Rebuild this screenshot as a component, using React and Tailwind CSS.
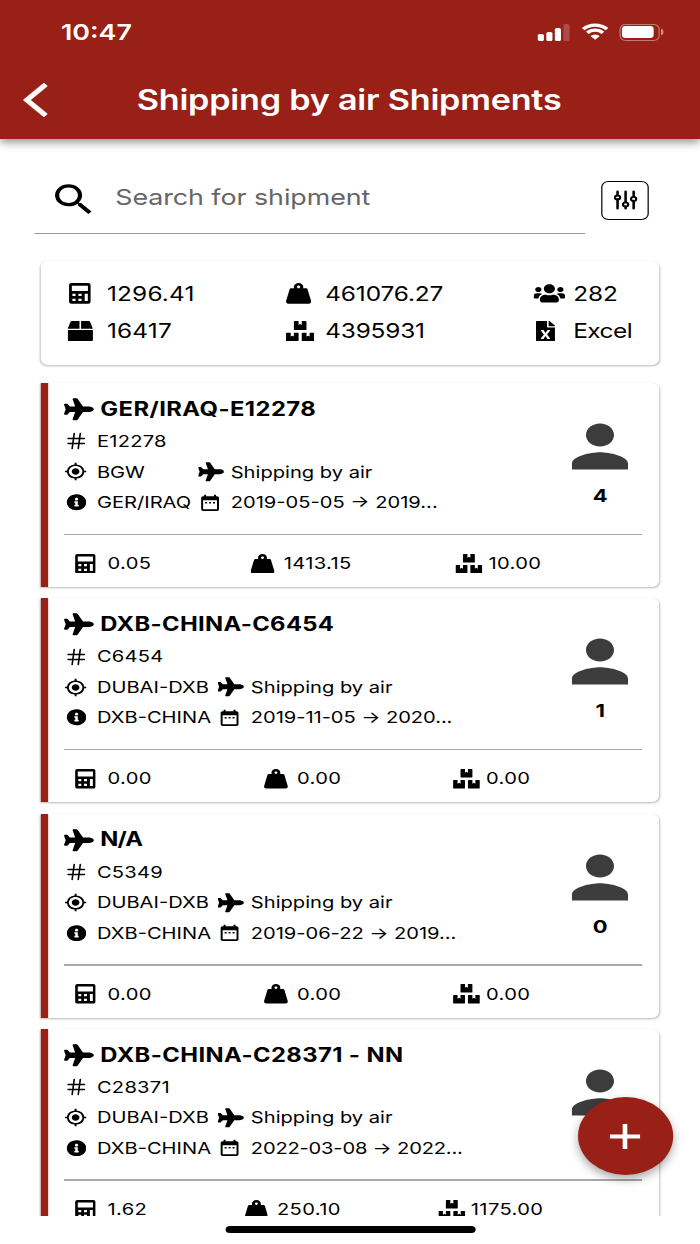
import React from "react";
import {
  FaWeightHanging,
  FaUsers,
  FaBox,
  FaBoxes,
  FaFileExcel,
  FaPlane,
  FaInfoCircle,
} from "react-icons/fa";
import { MdMyLocation, MdDateRange, MdPerson, MdSearch } from "react-icons/md";
import { Hash } from "lucide-react";

const shipments = [
  {
    title: "GER/IRAQ-E12278", code: "E12278", place: "BGW", route: "GER/IRAQ",
    dates: "2019-05-05 → 2019...", people: "4", stats: ["0.05", "1413.15", "10.00"],
    info: "grid-cols-[83px_1fr]", cols: "grid-cols-[144px_168px_1fr]",
    titleTracking: "tracking-[0.35px]", dateTracking: "tracking-normal",
  },
  {
    title: "DXB-CHINA-C6454", code: "C6454", place: "DUBAI-DXB", route: "DXB-CHINA",
    dates: "2019-11-05 → 2020...", people: "1", stats: ["0.00", "0.00", "0.00"],
    info: "grid-cols-[99.5px_1fr]", cols: "grid-cols-[155px_155px_1fr]",
    titleTracking: "tracking-[0.27px]", dateTracking: "tracking-[-0.05px]",
  },
  {
    title: "N/A", code: "C5349", place: "DUBAI-DXB", route: "DXB-CHINA",
    dates: "2019-06-22 → 2019...", people: "0", stats: ["0.00", "0.00", "0.00"],
    info: "grid-cols-[99.5px_1fr]", cols: "grid-cols-[155px_155px_1fr]",
    titleTracking: "tracking-[-0.8px]", dateTracking: "tracking-[-0.03px]",
  },
  {
    title: "DXB-CHINA-C28371 - NN", code: "C28371", place: "DUBAI-DXB", route: "DXB-CHINA",
    dates: "2022-03-08 → 2022...", people: "", stats: ["1.62", "250.10", "1175.00"],
    info: "grid-cols-[99.5px_1fr]", cols: "grid-cols-[138.5px_159px_1fr]",
    titleTracking: "tracking-[0.33px]", dateTracking: "tracking-[-0.16px]",
  },
];

function CalculatorIcon({ className }) {
  return (
    <svg className={className} viewBox="0 0 18 21" fill="currentColor" fillRule="evenodd">
      <path d="M2 0h14a2 2 0 0 1 2 2v17a2 2 0 0 1-2 2H2a2 2 0 0 1-2-2V2a2 2 0 0 1 2-2ZM2.3 2.8v5.2h13.4V2.8ZM2.8 10.9v2.4h2.6v-2.4ZM7.8 10.9v2.4h2.6v-2.4ZM13 10.9v7.4h2.6v-7.4ZM2.8 15.9v2.4h2.6v-2.4ZM7.8 15.9v2.4h2.6v-2.4Z" />
    </svg>
  );
}

function StatusBar() {
  return (
    <div className="flex h-[64px] items-center justify-between pl-[50px] pr-[29.8px]">
      <span className="text-[22px] font-semibold">10:47</span>
      <div className="flex h-[17px] items-end">
        <div className="mr-[9.5px] flex items-end gap-[1.9px]">
          <i className="h-[6.7px] w-[5px] rounded-[1.5px] bg-white" />
          <i className="h-[9px] w-[5px] rounded-[1.5px] bg-white" />
          <i className="h-[12.7px] w-[5px] rounded-[1.5px] bg-white" />
          <i className="h-[16.5px] w-[5px] rounded-[1.5px] bg-white/20" />
        </div>
        <svg className="mb-[1px] mr-[9px] h-[17px] w-[22px]" viewBox="0 0 22 17" fill="none" stroke="white" strokeWidth="3.2">
          <path d="M1.24 6.24a13.8 13.8 0 0 1 19.52 0" />
          <path d="M4.64 9.8a9 9 0 0 1 12.72 0" />
          <path d="M11 16.8 7.2 13a5.3 5.3 0 0 1 7.6 0Z" fill="white" stroke="none" />
        </svg>
        <div className="h-[17px] w-[33.6px] rounded-[5px] border border-white/40 p-[1.4px]">
          <div className="h-full w-[26px] rounded-[3px] bg-white" />
        </div>
        <i className="mb-[5.5px] ml-[1px] h-[6px] w-[2px] rounded-r-full bg-white/50" />
      </div>
    </div>
  );
}

function SummaryItem({ icon: Icon, iconClass, slot, text = "tracking-normal", children }) {
  return (
    <div className="flex items-center">
      <span className={slot}>
        <Icon className={iconClass} />
      </span>
      <span className={"text-[20px] " + text}>{children}</span>
    </div>
  );
}

function Stat({ icon: Icon, iconClass, slot, children }) {
  return (
    <div className="flex items-center pt-[1px]">
      <span className={slot}>
        <Icon className={iconClass} />
      </span>
      <span className="text-[16.5px] tracking-[0.3px]">{children}</span>
    </div>
  );
}

function InfoCell({ icon, slot, text = "tracking-normal", children }) {
  return (
    <div className="flex items-center">
      <span className={"shrink-0 " + slot}>{icon}</span>
      <span className={"whitespace-nowrap " + text}>{children}</span>
    </div>
  );
}

function ShipmentCard({ s }) {
  return (
    <article className="flex h-[204px] shrink-0 rounded-r-[6px] shadow-[0_1px_2px_rgba(0,0,0,0.28)]">
      <div className="w-[5.7px] bg-[#982016]" />
      <div className="flex-1 pl-[13.5px] pr-[14px]">
        <div className="flex h-[150.5px]">
          <div className="flex-1 pt-[11.4px] text-[16.5px]">
            <h2 className={"flex h-[30px] items-center whitespace-nowrap text-[19.5px] font-bold " + s.titleTracking}>
              <span className="w-[29.3px]"><FaPlane size={24.5} /></span>
              {s.title}
            </h2>
            <div className="flex h-[34px] items-center tracking-[0.2px]">
              <span className="w-[26.5px]"><Hash size={20} strokeWidth={1.6} className="-ml-[0.5px]" /></span>
              {s.code}
            </div>
            <div className={"grid h-[27px] items-center " + s.info}>
              <InfoCell slot="w-[26.5px]" icon={<MdMyLocation size={19} />}>{s.place}</InfoCell>
              <InfoCell slot="ml-[26.5px] w-[26.7px]" icon={<FaPlane size={21.5} />}>Shipping by air</InfoCell>
            </div>
            <div className={"grid h-[34px] items-center " + s.info}>
              <InfoCell slot="w-[26.5px] pl-[1.5px]" icon={<FaInfoCircle size={16.5} />}>{s.route}</InfoCell>
              <InfoCell slot="ml-[26.5px] w-[26.7px]" text={s.dateTracking} icon={<MdDateRange size={19.5} />}>{s.dates}</InfoCell>
            </div>
          </div>
          <div className="flex w-[69px] flex-col items-center pt-[29px] text-[#3c3c3c]">
            <MdPerson size={69} className="shrink-0" />
            <span className="pt-[1px] text-[18px] font-bold leading-[28px] text-black">{s.people}</span>
          </div>
        </div>
        <div className="h-[1.5px] bg-[#a9a9a9]" />
        <div className={"grid h-[56px] items-center pl-[9px] " + s.cols}>
          <Stat icon={CalculatorIcon} iconClass="h-[19.5px] w-[17px]" slot="w-[26.2px]">{s.stats[0]}</Stat>
          <Stat icon={FaWeightHanging} iconClass="h-[19.5px] w-[19.5px]" slot="w-[26.6px]">{s.stats[1]}</Stat>
          <Stat icon={FaBoxes} iconClass="h-[19.5px] w-[22px]" slot="w-[26.6px]">{s.stats[2]}</Stat>
        </div>
      </div>
    </article>
  );
}

export default function App() {
  return (
    <div className="h-[1244px] w-[700px] overflow-hidden bg-white">
      <div className="relative flex h-[1244px] w-[574px] origin-top-left scale-x-[1.2195] flex-col bg-white font-['Inter','Liberation_Sans',sans-serif] text-black">
        <header className="h-[138.5px] shrink-0 bg-[#982016] text-white shadow-[0_3px_8px_rgba(0,0,0,0.45)]">
          <StatusBar />
          <div className="flex h-[72px] items-center pl-[18.6px]">
            <svg className="h-[34px] w-[20px]" viewBox="0 2.1 11.67 19.8" fill="currentColor">
              <path d="M11.67 3.87 9.9 2.1 0 12l9.9 9.9 1.77-1.77L3.54 12z" stroke="currentColor" strokeWidth="0.25" />
            </svg>
            <h1 className="ml-[73.5px] whitespace-nowrap text-[28px] font-semibold tracking-[-0.18px]">Shipping by air Shipments</h1>
          </div>
        </header>

        <div className="flex h-[95.5px] shrink-0 pl-[28px] pr-[41px]">
          <div className="flex w-[452px] shrink-0 items-center border-b-[1.5px] border-[#9a9a9a] pl-[12.3px] pt-[27px]">
            <MdSearch size={41} />
            <span className="mb-[4px] ml-[13.2px] text-[22px] tracking-[-0.05px] text-[#666]">Search for shipment</span>
          </div>
          <button className="ml-[13.4px] mt-[42px] flex h-[39px] w-[38.6px] shrink-0 items-center justify-center rounded-[6px] border-[1.5px] border-black">
            <svg className="h-[20px] w-[20px]" viewBox="0 0 20 20" fill="none" stroke="black" strokeWidth="2.1" strokeLinecap="round">
              <path d="M3.4 1.5v3.3M3.4 9v9.5M10 1.5v10.8M10 16.6v1.9M16.6 1.5v5M16.6 10.7v7.8" />
              <circle cx="3.4" cy="7.6" r="2.1" strokeWidth="1.8" />
              <circle cx="10" cy="14.4" r="2.1" strokeWidth="1.8" />
              <circle cx="16.6" cy="9" r="2.1" strokeWidth="1.8" />
            </svg>
          </button>
        </div>

        <main className="flex h-[982px] shrink-0 translate-x-[0.5px] flex-col overflow-hidden pl-[33.3px] pr-[33.9px] pt-[27px]">
          <section className="mb-[18px] grid h-[104px] shrink-0 grid-cols-[179px_203.5px_1fr] grid-rows-[37.5px_37.5px] content-center items-center rounded-[6px] pl-[21.7px] pb-[1.5px] shadow-[0_1px_2px_rgba(0,0,0,0.28)]">
            <SummaryItem icon={CalculatorIcon} iconClass="ml-[1.3px] h-[20.7px] w-[18px]" slot="flex w-[32.2px]" text="tracking-[0.15px]">1296.41</SummaryItem>
            <SummaryItem icon={FaWeightHanging} iconClass="h-[20.7px] w-[20.7px]" slot="flex w-[32.2px]" text="tracking-[-0.1px]">461076.27</SummaryItem>
            <SummaryItem icon={FaUsers} iconClass="h-[20.7px] w-[26px]" slot="flex w-[32px]">282</SummaryItem>
            <SummaryItem icon={FaBox} iconClass="h-[20.7px] w-[20.7px]" slot="flex w-[32.2px]" text="tracking-[0.15px]">16417</SummaryItem>
            <SummaryItem icon={FaBoxes} iconClass="h-[20.7px] w-[23.3px]" slot="flex w-[32.2px]" text="tracking-[-0.15px]">4395931</SummaryItem>
            <SummaryItem icon={FaFileExcel} iconClass="ml-[2px] h-[20.7px] w-[15.6px]" slot="flex w-[32px]" text="tracking-[-0.4px]">Excel</SummaryItem>
          </section>
          <div className="flex flex-col gap-[11.25px]">
            {shipments.map((s) => (
              <ShipmentCard key={s.title} s={s} />
            ))}
          </div>
        </main>

        <div className="ml-[184.6px] mt-[10px] h-[7px] w-[205px] shrink-0 rounded-full bg-black" />

        <button
          aria-label="Add shipment"
          className="absolute right-[22.2px] top-[1097px] flex h-[78px] w-[78px] items-center justify-center rounded-full bg-[#982016] shadow-[0_4px_9px_rgba(0,0,0,0.35)]"
        >
          <svg className="h-[25px] w-[25px]" viewBox="0 0 25 25" stroke="white" strokeWidth="3.8">
            <path d="M0 12.5h25M12.5 0v25" />
          </svg>
        </button>
      </div>
    </div>
  );
}
